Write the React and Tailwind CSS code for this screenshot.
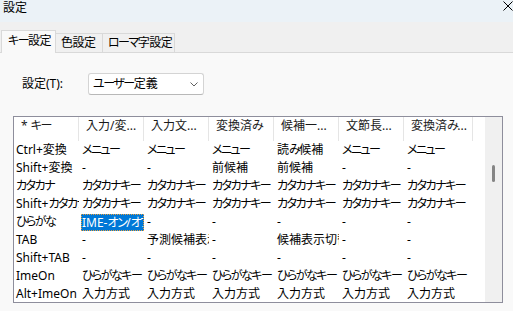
import React from 'react';

const headers = ['* キー', '入力/変...', '入力文...', '変換済み', '候補一...', '文節長...', '変換済み...'];

const rows = [
  ['Ctrl+変換', 'メニュー', 'メニュー', 'メニュー', '読み候補', 'メニュー', 'メニュー'],
  ['Shift+変換', '-', '-', '前候補', '前候補', '-', '-'],
  ['カタカナ', 'カタカナキー', 'カタカナキー', 'カタカナキー', 'カタカナキー', 'カタカナキー', 'カタカナキー'],
  ['Shift+カタカナ', 'カタカナキー', 'カタカナキー', 'カタカナキー', 'カタカナキー', 'カタカナキー', 'カタカナキー'],
  ['ひらがな', 'IME-オン/オフ', '-', '-', '-', '-', '-'],
  ['TAB', '-', '予測候補表示', '-', '候補表示切替', '-', '-'],
  ['Shift+TAB', '-', '-', '-', '-', '-', '-'],
  ['ImeOn', 'ひらがなキー', 'ひらがなキー', 'ひらがなキー', 'ひらがなキー', 'ひらがなキー', 'ひらがなキー'],
  ['Alt+ImeOn', '入力方式', '入力方式', '入力方式', '入力方式', '入力方式', '入力方式'],
];

const gridCols = 'grid grid-cols-[65px_65px_65px_65px_65px_65px_69px]';

// kana in the Windows UI font are narrower than in Noto, so tighten them
const Jp = ({ t }) =>
  t.split(/([\u3041-\u30ff]+)/).map((s, i) =>
    /[\u3041-\u30ff]/.test(s) ? (
      <span key={i} className="tracking-[-1.5px]">{s}</span>
    ) : (
      s
    )
  );

const App = () => {
  return (
    <div className="w-[513px] h-[311px] overflow-hidden flex flex-col bg-[#f9f9f9] text-[12px] text-black font-['Noto_Sans','Noto_Sans_CJK_JP',sans-serif] [font-feature-settings:'palt']">
      {/* title bar */}
      <div className="h-[22px] bg-[#ebf2f7] flex items-start justify-between pl-[3px]">
        <span className="leading-[15px] text-[12px]">設定</span>
        <svg width="10" height="10" viewBox="0 0 10 10" className="mt-[1px]">
          <path d="M0.5 0.5 L9.5 9.5 M9.5 0.5 L0.5 9.5" stroke="#000" strokeWidth="1" />
        </svg>
      </div>

      {/* tabs */}
      <div className="h-[30px] bg-[#f0f0f0] flex items-end pl-[1px] whitespace-nowrap tracking-[-0.5px]">
        <div className="h-[23px] -mb-px w-[55px] bg-[#f9f9f9] border-x border-t border-[#d9d9d9] pl-[6px] leading-[20px] z-10">
          <Jp t="キー設定" />
        </div>
        <div className="h-[19px] w-[47px] border-r border-t border-[#d9d9d9] pl-[5px] leading-[18px]">
          色設定
        </div>
        <div className="h-[19px] w-[72px] border-r border-t border-[#d9d9d9] pl-[5px] leading-[18px]">
          <Jp t="ローマ字設定" />
        </div>
      </div>

      {/* panel */}
      <div className="flex-1 border-t border-[#d9d9d9] bg-[#f9f9f9] pl-[13px]">
        <div className="flex items-center mt-[20px] h-[22px]">
          <span className="ml-[9px] w-[66px]">設定(T):</span>
          <div className="w-[116px] h-[22px] bg-white border border-[#d4d4d4] border-b-[#b8b8b8] rounded-[3px] flex items-center justify-between pl-[4px] pr-[5px]">
            <span className="leading-[16px]">
              <Jp t="ユーザー定義" />
            </span>
            <svg width="8" height="5" viewBox="0 0 8 5">
              <path d="M0.5 0.5 L4 4 L7.5 0.5" fill="none" stroke="#606060" strokeWidth="1" />
            </svg>
          </div>
        </div>

        {/* list view */}
        <div className="mt-[21px] w-[490px] h-[187px] border border-[#8e8e9c] bg-white flex">
          <div className="w-[471px] overflow-hidden">
            <div className={`${gridCols} h-[24px]`}>
              {headers.map((h, i) => (
                <div key={i} className="border-r border-[#e5e5e5] pl-[7px] leading-[17px] whitespace-nowrap overflow-hidden text-[#1a1a1a]">
                  <Jp t={h} />
                </div>
              ))}
            </div>
            {rows.map((row, r) => (
              <div key={r} className={`${gridCols} h-[18px]`}>
                {row.map((cell, c) => {
                  const selected = r === 4 && c === 1;
                  if (selected) {
                    return (
                      <div key={c} className="pl-[2px] pt-[1px] overflow-hidden whitespace-nowrap">
                        <div className="h-[17px] bg-[#0078d7] text-white leading-[15px] border border-dotted border-[#e8a040] overflow-hidden">
                          <Jp t={cell} />
                        </div>
                      </div>
                    );
                  }
                  return (
                    <div key={c} className={`${c === 0 ? 'pl-[2px]' : 'pl-[3px]'} leading-[18px] overflow-hidden whitespace-nowrap`}>
                      <Jp t={cell} />
                    </div>
                  );
                })}
              </div>
            ))}
          </div>
          <div className="w-[17px] bg-[#f0f0f0] pt-[48px] pl-[7px]">
            <div className="w-[3px] h-[17px] rounded-full bg-[#858585]" />
          </div>
        </div>
      </div>
    </div>
  );
};

export default App;
